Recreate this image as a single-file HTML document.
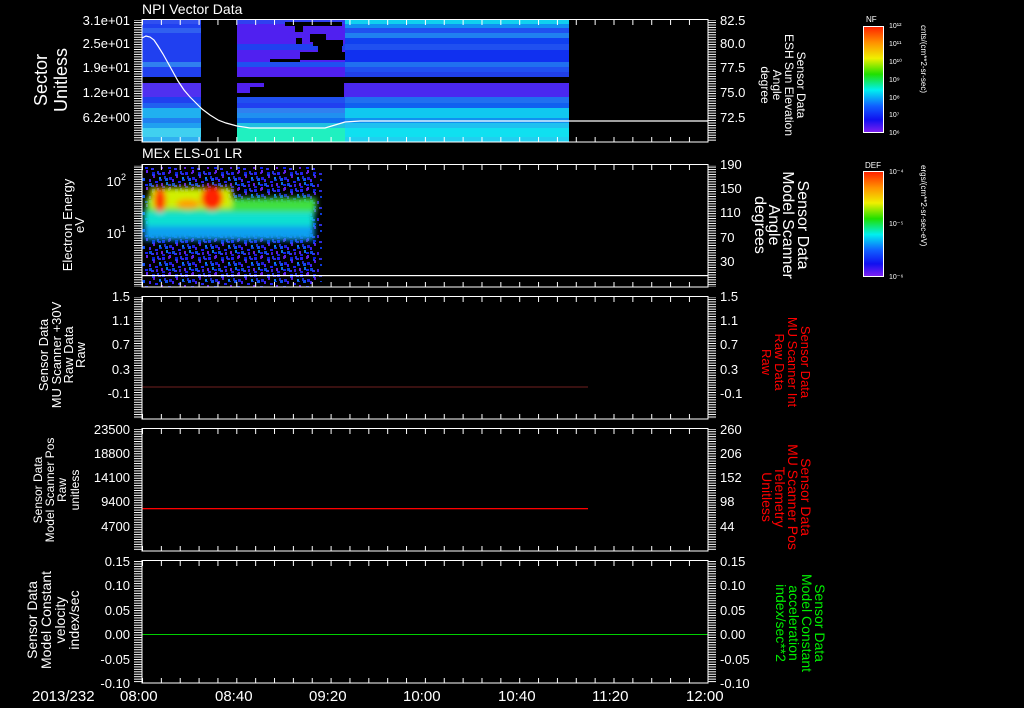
<!DOCTYPE html>
<html><head><meta charset="utf-8"><style>
html,body{margin:0;padding:0;background:#000;}
svg{display:block}
text{font-family:"Liberation Sans",sans-serif;fill:#fff}
</style></head><body>
<svg width="1024" height="708" viewBox="0 0 1024 708" xmlns="http://www.w3.org/2000/svg">
<defs>
<linearGradient id="rb" x1="0" y1="0" x2="0" y2="1">
<stop offset="0" stop-color="#ff2000"/><stop offset="0.15" stop-color="#ff9000"/><stop offset="0.3" stop-color="#f0f000"/><stop offset="0.45" stop-color="#20e000"/><stop offset="0.6" stop-color="#00f0f0"/><stop offset="0.75" stop-color="#1060ff"/><stop offset="0.88" stop-color="#1010f0"/><stop offset="1" stop-color="#8020f0"/>
</linearGradient>
<pattern id="nz" width="23" height="17" patternUnits="userSpaceOnUse">
<rect x="1" y="2" width="3" height="3" fill="#2020f0"/><rect x="8" y="0" width="2" height="3" fill="#6020f0"/><rect x="14" y="4" width="3" height="2" fill="#1040f0"/><rect x="19" y="1" width="2" height="3" fill="#2030e0"/><rect x="4" y="8" width="3" height="3" fill="#1050f0"/><rect x="11" y="9" width="2" height="3" fill="#4020f0"/><rect x="17" y="11" width="3" height="2" fill="#2020f0"/><rect x="0" y="13" width="2" height="3" fill="#6020e0"/><rect x="7" y="14" width="3" height="2" fill="#1020f0"/><rect x="21" y="7" width="2" height="3" fill="#1080f0"/><rect x="13" y="15" width="3" height="2" fill="#3030f0"/>
</pattern>
<filter id="bl" x="-20%" y="-20%" width="140%" height="140%"><feGaussianBlur stdDeviation="3"/></filter>
</defs>

<!-- Panel 1 heatmap -->
<g shape-rendering="crispEdges">
<rect x="142" y="20" width="59" height="122" fill="#2040f0"/>
<rect x="237" y="20" width="108" height="122" fill="#5020f0"/>
<rect x="345" y="20" width="224" height="122" fill="#2050f0"/>
<rect x="142" y="20" width="59" height="4" fill="#3050f0"/><rect x="142" y="28" width="59" height="5" fill="#3060f0"/><rect x="142" y="62" width="59" height="5" fill="#3080f0"/><rect x="142" y="83" width="59" height="14" fill="#5030f0"/><rect x="142" y="103" width="59" height="5" fill="#2060f0"/><rect x="142" y="108" width="59" height="10" fill="#20b0f0"/><rect x="142" y="118" width="59" height="5" fill="#2080f0"/><rect x="142" y="123" width="59" height="5" fill="#20a0f0"/><rect x="142" y="128" width="59" height="9" fill="#40d0f0"/><rect x="142" y="137" width="59" height="5" fill="#30b0f0"/>
<rect x="237" y="20" width="108" height="4" fill="#3040f0"/><rect x="237" y="44" width="108" height="6" fill="#2040f0"/><rect x="237" y="62" width="108" height="5" fill="#2050f0"/><rect x="237" y="97" width="108" height="6" fill="#2050f0"/><rect x="237" y="103" width="108" height="5" fill="#2040f0"/><rect x="237" y="108" width="108" height="5" fill="#3080f0"/><rect x="237" y="113" width="108" height="5" fill="#2090f0"/><rect x="237" y="118" width="108" height="5" fill="#1070f0"/><rect x="237" y="123" width="108" height="5" fill="#20c0e0"/><rect x="237" y="128" width="108" height="14" fill="#20f0c0"/>
<rect x="345" y="20" width="224" height="4" fill="#10d0f0"/><rect x="345" y="24" width="224" height="4" fill="#1090f0"/><rect x="345" y="33" width="224" height="5" fill="#2080f0"/><rect x="345" y="38" width="224" height="6" fill="#1040f0"/><rect x="345" y="50" width="224" height="12" fill="#1030f0"/><rect x="345" y="62" width="224" height="5" fill="#2070f0"/><rect x="345" y="72" width="224" height="5" fill="#2040e8"/><rect x="345" y="83" width="224" height="14" fill="#4a28f0"/><rect x="345" y="97" width="224" height="6" fill="#2070f0"/><rect x="345" y="103" width="224" height="5" fill="#1060f0"/><rect x="345" y="108" width="224" height="10" fill="#10c8f0"/><rect x="345" y="118" width="224" height="5" fill="#1090f0"/><rect x="345" y="123" width="224" height="5" fill="#20c0f0"/><rect x="345" y="128" width="224" height="9" fill="#10e0f0"/><rect x="345" y="137" width="224" height="5" fill="#20d0f0"/>
<rect x="142" y="77" width="427" height="6" fill="#000"/>
<rect x="285" y="22" width="57" height="4" fill="#000"/><rect x="295" y="26" width="8" height="6" fill="#000"/><rect x="310" y="34" width="16" height="8" fill="#000"/><rect x="313" y="40" width="30" height="6" fill="#000"/><rect x="300" y="52" width="45" height="8" fill="#000"/><rect x="318" y="44" width="24" height="10" fill="#000"/><rect x="270" y="59" width="30" height="3" fill="#000"/><rect x="296" y="38" width="6" height="6" fill="#000"/>
<rect x="264" y="83" width="80" height="4" fill="#000"/><rect x="250" y="87" width="94" height="10" fill="#000"/><rect x="237" y="93" width="20" height="4" fill="#000"/>
</g>
<polyline fill="none" stroke="#fff" stroke-width="1.2" points="142,38 146,36 150,37 154,40 158,46 163,54 168,63 173,72 178,81 184,90 190,97 196,103 202,109 210,115 218,120 226,123 237,126 250,128 290,128 325,128 335,125 345,122 360,121 708,121"/>

<!-- Panel 2 -->
<rect x="142" y="167" width="173" height="120" fill="url(#nz)"/>
<rect x="142" y="167" width="173" height="110" fill="url(#nz)" transform="translate(7 5)" opacity="0.9"/>
<g filter="url(#bl)">
<rect x="144" y="222" width="170" height="18" fill="#10a0f0"/>
<rect x="144" y="210" width="170" height="16" fill="#10e0d0"/>
<rect x="146" y="198" width="170" height="14" fill="#40e040"/>
<rect x="150" y="188" width="82" height="20" fill="#d0f000"/>
<ellipse cx="160" cy="200" rx="6" ry="12" fill="#ff3000"/>
<ellipse cx="212" cy="198" rx="11" ry="12" fill="#ff2000"/>
<ellipse cx="188" cy="204" rx="12" ry="5" fill="#ffa000"/>
</g>
<rect x="142" y="275" width="566" height="1.2" fill="#fff"/>

<rect x="142" y="386.5" width="446" height="1" fill="#702020"/>
<rect x="142" y="508" width="446" height="1.3" fill="#ff0000"/>
<rect x="142" y="634" width="566" height="1" fill="#00d000"/>

<g fill="none" stroke="#fff" stroke-width="1.2" shape-rendering="crispEdges">
<rect x="142" y="19.5" width="566" height="122.5"/>
<rect x="142" y="164.5" width="566" height="122.5"/>
<rect x="142" y="296.5" width="566" height="122.5"/>
<rect x="142" y="428.5" width="566" height="122.5"/>
<rect x="142" y="560.5" width="566" height="122.5"/>
</g>
<defs>
<pattern id="yt" width="10" height="2.45" patternUnits="userSpaceOnUse"><rect x="0" y="0" width="10" height="1" fill="#fff"/></pattern>
<pattern id="xt" width="18.86" height="10" patternUnits="userSpaceOnUse" x="142"><rect x="0" y="0" width="1" height="10" fill="#fff"/></pattern>
</defs>
<g shape-rendering="crispEdges">
<rect x="134" y="20" width="8" height="122" fill="url(#yt)"/><rect x="708" y="20" width="8" height="122" fill="url(#yt)"/>
<rect x="134" y="165" width="8" height="122" fill="url(#yt)"/><rect x="708" y="165" width="8" height="122" fill="url(#yt)"/>
<rect x="134" y="297" width="8" height="122" fill="url(#yt)"/><rect x="708" y="297" width="8" height="122" fill="url(#yt)"/>
<rect x="134" y="429" width="8" height="122" fill="url(#yt)"/><rect x="708" y="429" width="8" height="122" fill="url(#yt)"/>
<rect x="134" y="561" width="8" height="122" fill="url(#yt)"/><rect x="708" y="561" width="8" height="122" fill="url(#yt)"/>
<rect x="142" y="20" width="566" height="5" fill="url(#xt)"/><rect x="142" y="137" width="566" height="5" fill="url(#xt)"/>
<rect x="142" y="165" width="566" height="5" fill="url(#xt)"/><rect x="142" y="282" width="566" height="5" fill="url(#xt)"/>
<rect x="142" y="297" width="566" height="5" fill="url(#xt)"/><rect x="142" y="414" width="566" height="5" fill="url(#xt)"/>
<rect x="142" y="429" width="566" height="5" fill="url(#xt)"/><rect x="142" y="546" width="566" height="5" fill="url(#xt)"/>
<rect x="142" y="561" width="566" height="5" fill="url(#xt)"/><rect x="142" y="678" width="566" height="5" fill="url(#xt)"/>
</g>

<text x="142" y="14" font-size="14">NPI Vector Data</text>
<text x="142" y="158" font-size="14">MEx ELS-01 LR</text>

<g font-size="13" text-anchor="end">
<text x="130" y="25">3.1e+01</text><text x="130" y="48">2.5e+01</text><text x="130" y="72">1.9e+01</text><text x="130" y="97">1.2e+01</text><text x="130" y="122">6.2e+00</text>
<text x="126" y="186">10<tspan font-size="9" dy="-6">2</tspan></text><text x="126" y="238">10<tspan font-size="9" dy="-6">1</tspan></text>
<text x="130" y="301">1.5</text><text x="130" y="325">1.1</text><text x="130" y="349">0.7</text><text x="130" y="374">0.3</text><text x="130" y="398">-0.1</text>
<text x="130" y="434">23500</text><text x="130" y="458">18800</text><text x="130" y="482">14100</text><text x="130" y="506">9400</text><text x="130" y="531">4700</text>
<text x="130" y="566">0.15</text><text x="130" y="590">0.10</text><text x="130" y="615">0.05</text><text x="130" y="639">0.00</text><text x="130" y="664">-0.05</text><text x="130" y="688">-0.10</text>
</g>
<g font-size="13">
<text x="720" y="25">82.5</text><text x="720" y="48">80.0</text><text x="720" y="72">77.5</text><text x="720" y="97">75.0</text><text x="720" y="122">72.5</text>
<text x="720" y="169">190</text><text x="720" y="193">150</text><text x="720" y="217">110</text><text x="720" y="242">70</text><text x="720" y="266">30</text>
<text x="720" y="301">1.5</text><text x="720" y="325">1.1</text><text x="720" y="349">0.7</text><text x="720" y="374">0.3</text><text x="720" y="398">-0.1</text>
<text x="720" y="434">260</text><text x="720" y="458">206</text><text x="720" y="482">152</text><text x="720" y="506">98</text><text x="720" y="531">44</text>
<text x="720" y="566">0.15</text><text x="720" y="590">0.10</text><text x="720" y="615">0.05</text><text x="720" y="639">0.00</text><text x="720" y="664">-0.05</text><text x="720" y="688">-0.10</text>
</g>
<g font-size="15">
<text x="32" y="701">2013/232</text>
<text x="120" y="701">08:00</text><text x="215" y="701">08:40</text><text x="309" y="701">09:20</text><text x="403" y="701">10:00</text><text x="498" y="701">10:40</text><text x="592" y="701">11:20</text><text x="686" y="701">12:00</text>
</g>

<g text-anchor="middle">
<g transform="translate(47 80) rotate(-90)" font-size="18"><text x="0" y="0">Sector</text><text x="0" y="20">Unitless</text></g>
<g transform="translate(72 225) rotate(-90)" font-size="13"><text x="0" y="0">Electron Energy</text><text x="0" y="12">eV</text></g>
<g transform="translate(48 355) rotate(-90)" font-size="13"><text x="0" y="0">Sensor Data</text><text x="0" y="13">MU Scanner +30V</text><text x="0" y="25">Raw Data</text><text x="0" y="37">Raw</text></g>
<g transform="translate(42 490) rotate(-90)" font-size="12"><text x="0" y="0">Sensor Data</text><text x="0" y="12">Model Scanner Pos</text><text x="0" y="24">Raw</text><text x="0" y="37">unitless</text></g>
<g transform="translate(37 620) rotate(-90)" font-size="14"><text x="0" y="0">Sensor Data</text><text x="0" y="14">Model Constant</text><text x="0" y="28">velocity</text><text x="0" y="42">index/sec</text></g>
</g>
<g text-anchor="middle">
<g transform="translate(797 85) rotate(90)" font-size="12"><text x="0" y="0">Sensor Data</text><text x="0" y="12">ESH Sun Elevation</text><text x="0" y="24">Angle</text><text x="0" y="36">degree</text></g>
<g transform="translate(798 225) rotate(90)" font-size="16"><text x="0" y="0">Sensor Data</text><text x="0" y="15">Model Scanner</text><text x="0" y="29">Angle</text><text x="0" y="43">degrees</text></g>
<g transform="translate(801 362) rotate(90)" font-size="13"><text x="0" y="0" style="fill:#f00">Sensor Data</text><text x="0" y="13" style="fill:#f00">MU Scanner Int</text><text x="0" y="26" style="fill:#f00">Raw Data</text><text x="0" y="39" style="fill:#f00">Raw</text></g>
<g transform="translate(801 497) rotate(90)" font-size="14"><text x="0" y="0" style="fill:#f00">Sensor Data</text><text x="0" y="13" style="fill:#f00">MU Scanner Pos</text><text x="0" y="26" style="fill:#f00">Telemetry</text><text x="0" y="39" style="fill:#f00">Unitless</text></g>
<g transform="translate(815 623) rotate(90)" font-size="14"><text x="0" y="0" style="fill:#0e0">Sensor Data</text><text x="0" y="13" style="fill:#0e0">Model Constant</text><text x="0" y="26" style="fill:#0e0">acceleration</text><text x="0" y="39" style="fill:#0e0">index/sec**2</text></g>
</g>

<rect x="863.5" y="26.5" width="20" height="106" fill="url(#rb)" stroke="#fff"/>
<text x="866" y="22" font-size="8">NF</text>
<g font-size="7"><text x="889" y="28">10¹²</text><text x="889" y="46">10¹¹</text><text x="889" y="64">10¹⁰</text><text x="889" y="82">10⁹</text><text x="889" y="100">10⁸</text><text x="889" y="117">10⁷</text><text x="889" y="135">10⁶</text></g>
<text transform="translate(921 25) rotate(90)" font-size="8">cnts/(cm**2-sr-sec)</text>
<rect x="863.5" y="171.5" width="20" height="105" fill="url(#rb)" stroke="#fff"/>
<text x="865" y="168" font-size="8">DEF</text>
<g font-size="7"><text x="889" y="174">10⁻⁴</text><text x="889" y="226">10⁻⁵</text><text x="889" y="279">10⁻⁶</text></g>
<text transform="translate(921 165) rotate(90)" font-size="8">ergs/(cm**2-sr-sec-eV)</text>
</svg>
</body></html>
